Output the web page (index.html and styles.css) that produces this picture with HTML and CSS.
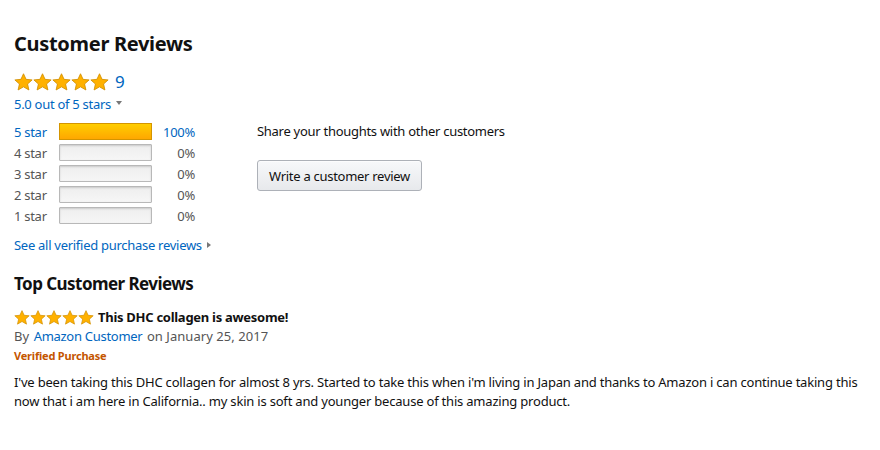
FILE: index.html
```html
<!DOCTYPE html>
<html>
<head>
<meta charset="utf-8">
<link rel="stylesheet" href="styles.css">
</head>
<body>
<div class="page">
  <h2 class="title">Customer Reviews</h2>
  <div class="rating">
    <span class="stars big">
      <svg viewBox="0 0 20 19"><path class="st" d="M10 0.8l2.7 5.9 6.4 0.6-4.8 4.3 1.4 6.3L10 14.6l-5.7 3.3 1.4-6.3L0.9 7.3l6.4-0.6z"/></svg>
      <svg viewBox="0 0 20 19"><path class="st" d="M10 0.8l2.7 5.9 6.4 0.6-4.8 4.3 1.4 6.3L10 14.6l-5.7 3.3 1.4-6.3L0.9 7.3l6.4-0.6z"/></svg>
      <svg viewBox="0 0 20 19"><path class="st" d="M10 0.8l2.7 5.9 6.4 0.6-4.8 4.3 1.4 6.3L10 14.6l-5.7 3.3 1.4-6.3L0.9 7.3l6.4-0.6z"/></svg>
      <svg viewBox="0 0 20 19"><path class="st" d="M10 0.8l2.7 5.9 6.4 0.6-4.8 4.3 1.4 6.3L10 14.6l-5.7 3.3 1.4-6.3L0.9 7.3l6.4-0.6z"/></svg>
      <svg viewBox="0 0 20 19"><path class="st" d="M10 0.8l2.7 5.9 6.4 0.6-4.8 4.3 1.4 6.3L10 14.6l-5.7 3.3 1.4-6.3L0.9 7.3l6.4-0.6z"/></svg>
    </span>
    <a class="count">9</a>
  </div>
  <div class="outof"><a>5.0 out of 5 stars</a><span class="caret"></span></div>

  <div class="summary">
    <div class="histo">
      <div class="row"><a class="lbl link">5 star</a><span class="bar"><span class="fill" style="width:100%"></span></span><a class="pct link">100%</a></div>
      <div class="row"><span class="lbl">4 star</span><span class="bar"></span><span class="pct">0%</span></div>
      <div class="row"><span class="lbl">3 star</span><span class="bar"></span><span class="pct">0%</span></div>
      <div class="row"><span class="lbl">2 star</span><span class="bar"></span><span class="pct">0%</span></div>
      <div class="row"><span class="lbl">1 star</span><span class="bar"></span><span class="pct">0%</span></div>
    </div>
    <div class="share">
      <div class="share-text">Share your thoughts with other customers</div>
      <button class="btn">Write a customer review</button>
    </div>
  </div>

  <div class="seeall"><a>See all verified purchase reviews</a><span class="rcaret"></span></div>

  <h3 class="subtitle">Top Customer Reviews</h3>
  <div class="review">
    <div class="rhead">
      <span class="stars small">
        <svg viewBox="0 0 20 19"><path class="st" d="M10 0.8l2.7 5.9 6.4 0.6-4.8 4.3 1.4 6.3L10 14.6l-5.7 3.3 1.4-6.3L0.9 7.3l6.4-0.6z"/></svg>
        <svg viewBox="0 0 20 19"><path class="st" d="M10 0.8l2.7 5.9 6.4 0.6-4.8 4.3 1.4 6.3L10 14.6l-5.7 3.3 1.4-6.3L0.9 7.3l6.4-0.6z"/></svg>
        <svg viewBox="0 0 20 19"><path class="st" d="M10 0.8l2.7 5.9 6.4 0.6-4.8 4.3 1.4 6.3L10 14.6l-5.7 3.3 1.4-6.3L0.9 7.3l6.4-0.6z"/></svg>
        <svg viewBox="0 0 20 19"><path class="st" d="M10 0.8l2.7 5.9 6.4 0.6-4.8 4.3 1.4 6.3L10 14.6l-5.7 3.3 1.4-6.3L0.9 7.3l6.4-0.6z"/></svg>
        <svg viewBox="0 0 20 19"><path class="st" d="M10 0.8l2.7 5.9 6.4 0.6-4.8 4.3 1.4 6.3L10 14.6l-5.7 3.3 1.4-6.3L0.9 7.3l6.4-0.6z"/></svg>
      </span>
      <span class="rtitle">This DHC collagen is awesome!</span>
    </div>
    <div class="byline">By <a class="author">Amazon Customer</a> on January 25, 2017</div>
    <div class="verified">Verified Purchase</div>
    <p class="body">I've been taking this DHC collagen for almost 8 yrs. Started to take this when i'm living in Japan and thanks to Amazon i can continue taking this now that i am here in California.. my skin is soft and younger because of this amazing product.</p>
  </div>
</div>
</body>
</html>
```
FILE: styles.css
```css
* { box-sizing: border-box; }
body { margin: 0; background: #fff; font-family: "Noto Sans", "Open Sans", sans-serif; font-size: 13px; letter-spacing: -0.28px; color: #111; }
.page { padding: 28px 14px 0 14px; width: 876px; }
a { color: #0066c0; }
.title { margin: 0; font-size: 20px; font-weight: 700; line-height: 32px; color: #111; letter-spacing: -0.3px; }
.rating { display: flex; align-items: center; margin-top: 12px; height: 20px; }
.stars { display: inline-flex; }
.stars svg { display: block; }
.stars.big svg { width: 19px; height: 18px; }
.st { fill: #ffb100; stroke: #d18f00; stroke-width: 0.9; stroke-linejoin: round; }
.count { font-size: 17px; margin-left: 6px; line-height: 20px; }
.outof { margin-top: 2px; line-height: 20px; display: flex; align-items: center; }
.caret { width: 0; height: 0; border-left: 3.5px solid transparent; border-right: 3.5px solid transparent; border-top: 4px solid #777; margin-left: 5px; margin-top: -2px; }
.summary { display: flex; margin-top: 7px; }
.histo { width: 243px; }
.row { display: flex; align-items: center; height: 21px; }
.lbl { width: 45px; color: #555; }
.lbl.link, .pct.link { color: #0066c0; }
.bar { width: 93px; height: 17px; border: 1px solid #b8b8b8; border-radius: 1px; background: linear-gradient(#eee, #f6f6f6); box-shadow: inset 0 1px 2px rgba(0,0,0,.15); display: block; }
.fill { display: block; height: 15px; background: linear-gradient(#ffce00, #ffa700); box-shadow: 0 0 0 1px #d49500; }
.pct { width: 43px; text-align: right; color: #555; }
.share-text { line-height: 21px; }
.btn { margin-top: 18px; height: 31px; width: 165px; padding: 0; font: inherit; letter-spacing: inherit; color: #111; background: linear-gradient(#f7f8fa, #e7e9ec); border: 1px solid #adb1b8; border-radius: 3px; box-shadow: 0 1px 0 rgba(255,255,255,.6) inset; }
.seeall { margin-top: 9px; display: flex; align-items: center; line-height: 20px; }
.rcaret { width: 0; height: 0; border-top: 3.5px solid transparent; border-bottom: 3.5px solid transparent; border-left: 4px solid #777; margin-left: 5px; }
.subtitle { margin: 17px 0 0; font-size: 17px; font-weight: 700; line-height: 24px; letter-spacing: -0.55px; }
.review { margin-top: 12px; }
.rhead { display: flex; align-items: center; height: 18px; }
.stars.small svg { width: 16px; height: 15px; }
.rtitle { font-weight: 700; margin-left: 4px; }
.byline { line-height: 19px; margin-top: 1px; color: #555; letter-spacing: 0.05px; }
.author { color: #0066c0; margin: 0 1px 0 1px; letter-spacing: -0.28px; }
.verified { color: #c45500; font-size: 11px; font-weight: 700; line-height: 18px; margin-top: 1px; letter-spacing: -0.2px; }
.body { margin: 8px 0 0; line-height: 19px; color: #111; letter-spacing: -0.2px; }
```
